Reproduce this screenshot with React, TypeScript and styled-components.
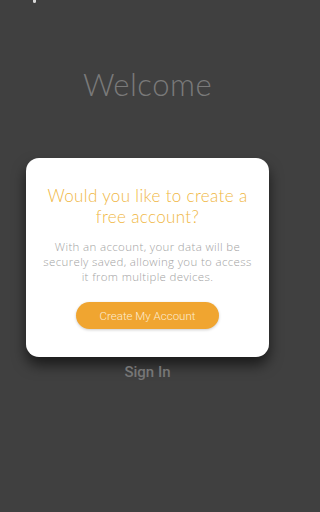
import styled, { createGlobalStyle } from "styled-components";

const GlobalStyle = createGlobalStyle`
  html, body {
    margin: 0;
    padding: 0;
    background: #404040;
  }
  #root {
    height: 512px;
  }
`;

const App = () => {
  return (
    <>
      <GlobalStyle />
      <Screen>
        <StatusMark />
        <Welcome>Welcome</Welcome>
        <Card>
          <Title>Would you like to create a free account?</Title>
          <Body>
            With an account, your data will be securely saved, allowing you to
            access it from multiple devices.
          </Body>
          <CreateButton>Create My Account</CreateButton>
        </Card>
        <SignIn>Sign In</SignIn>
      </Screen>
    </>
  );
};

const Screen = styled.div`
  position: relative;
  width: 295px;
  height: 512px;
  background: #404040;
  display: flex;
  flex-direction: column;
  align-items: center;
  overflow: hidden;
`;

const StatusMark = styled.div`
  position: absolute;
  left: 33px;
  top: 0;
  width: 3px;
  height: 3px;
  border-radius: 0 0 2px 2px;
  background: #d8d8d8;
`;

const Welcome = styled.h1`
  margin: 64px 0 0;
  font-family: "Lato", "DejaVu Sans", sans-serif;
  font-weight: 300;
  font-size: 31px;
  letter-spacing: 0.5px;
  color: #7a7a7a;
  line-height: 40px;
`;

const Card = styled.div`
  margin-top: 54px;
  width: 243px;
  height: 199px;
  box-sizing: border-box;
  background: #ffffff;
  border-radius: 13px;
  box-shadow: 0 8px 14px rgba(0, 0, 0, 0.6);
  display: flex;
  flex-direction: column;
  align-items: center;
  padding: 27px 12px 0;
`;

const Title = styled.h2`
  margin: 0;
  font-family: "Lato", "DejaVu Sans", sans-serif;
  font-weight: 300;
  font-size: 17px;
  line-height: 21px;
  letter-spacing: 0.35px;
  color: #f0b744;
  text-align: center;
  padding: 0 4px;
`;

const Body = styled.p`
  margin: 12px 0 0;
  padding: 0 4px;
  font-family: "Open Sans", "DejaVu Sans", sans-serif;
  font-weight: 300;
  font-size: 11.5px;
  line-height: 15px;
  letter-spacing: 0.35px;
  color: #a3a3a3;
  text-align: center;
`;

const CreateButton = styled.button`
  margin-top: 18px;
  width: 143px;
  height: 27px;
  border: none;
  border-radius: 14px;
  background: #f0a530;
  color: #fcecd0;
  font-family: "Roboto", "Liberation Sans", sans-serif;
  font-weight: 300;
  font-size: 11.5px;
  box-shadow: 0 1px 3px rgba(0, 0, 0, 0.2);
`;

const SignIn = styled.div`
  margin-top: 6px;
  font-family: "Roboto", "Liberation Sans", sans-serif;
  font-weight: 500;
  font-size: 15px;
  color: #767676;
`;

export default App;
